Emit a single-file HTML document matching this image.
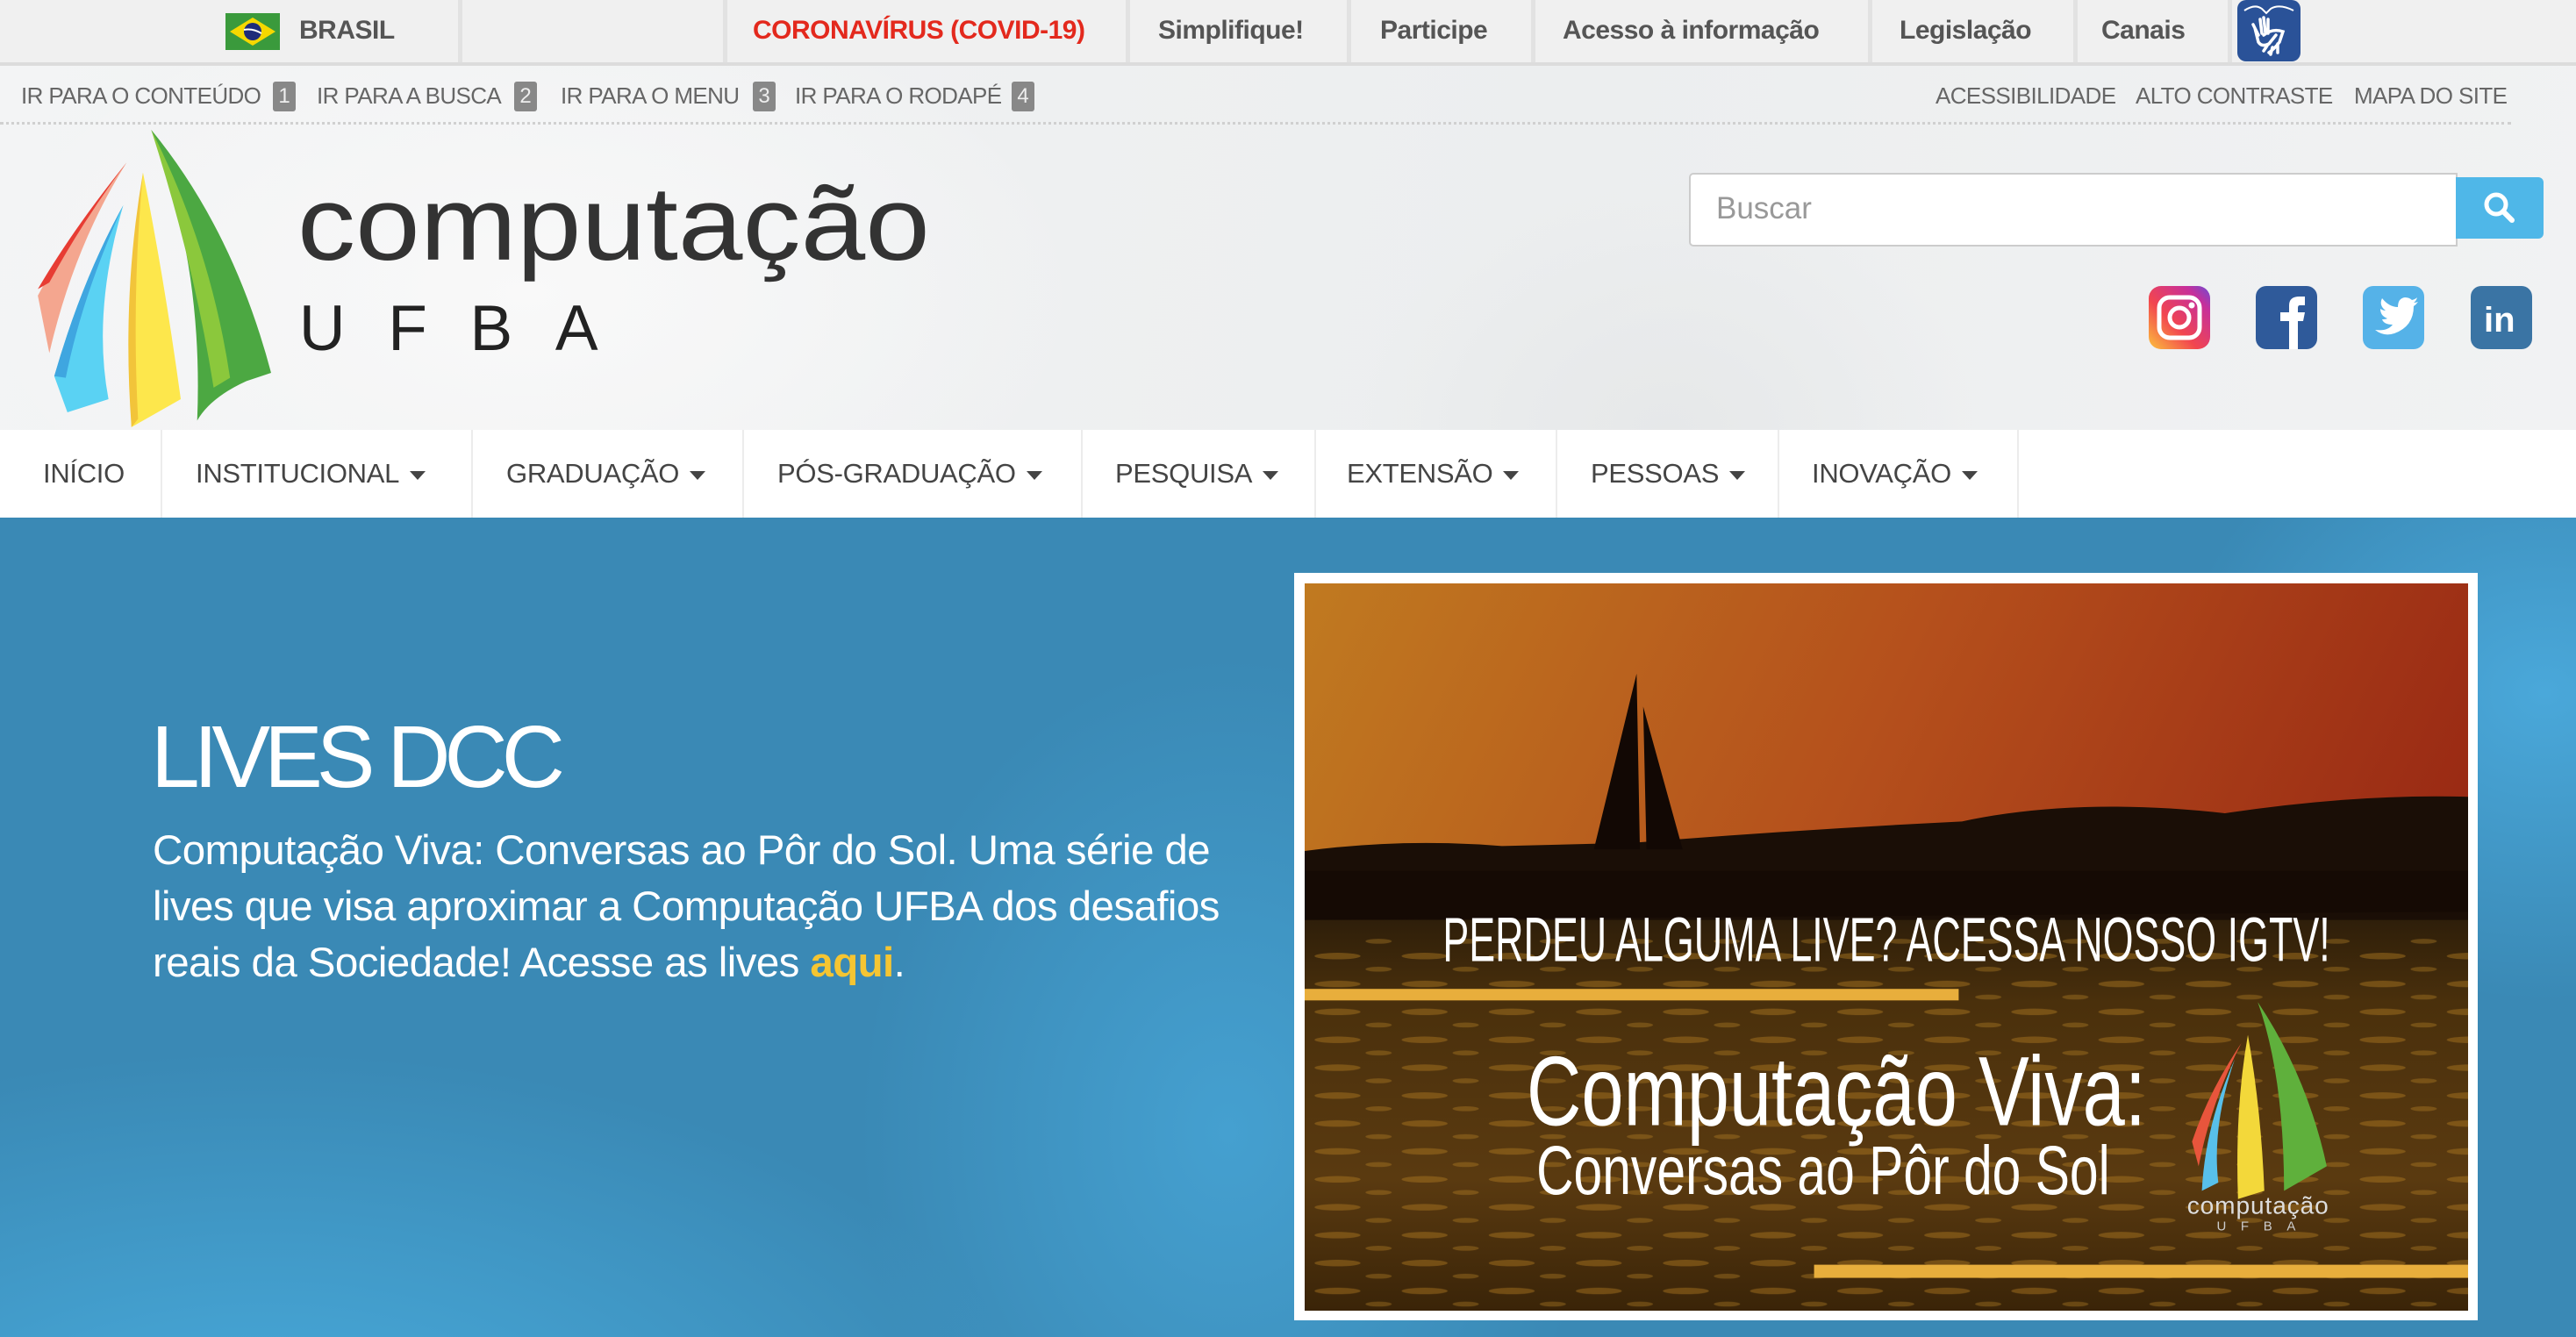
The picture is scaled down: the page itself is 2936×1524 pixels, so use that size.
<!DOCTYPE html>
<html><head><meta charset="utf-8"><style>
*{margin:0;padding:0;box-sizing:border-box}
body{width:2936px;height:1524px;overflow:hidden;font-family:"Liberation Sans",sans-serif;position:relative;background:#fff}
.abs{position:absolute;white-space:nowrap}
#top{position:absolute;left:0;top:0;width:2936px;height:75px;background:#f0f0f0;border-bottom:4px solid #dcdcdc}
.sep{position:absolute;top:0;width:5px;height:71px;background:#e2e2e2}
.tb{position:absolute;top:18px;font-size:30px;font-weight:bold;color:#555;letter-spacing:-0.5px}
#hdr{position:absolute;left:0;top:75px;width:2936px;height:415px;background:radial-gradient(ellipse 900px 500px at 600px 260px,#f9f9f9,rgba(240,241,242,0) 70%),radial-gradient(ellipse 500px 420px at 1900px 420px,#e6e8e9,rgba(238,239,240,0) 70%),linear-gradient(100deg,#f3f4f5,#eceeef 60%,#f1f2f3)}
.sk{position:absolute;top:94px;font-size:26px;color:#666;letter-spacing:-0.6px}
.bd{position:absolute;top:93px;width:26px;height:34px;background:#888;color:#eee;font-size:24px;text-align:center;line-height:34px;border-radius:3px}
#nav{position:absolute;left:0;top:490px;width:2936px;height:100px;background:#fff}
.nv{position:absolute;top:32px;font-size:31px;color:#444;letter-spacing:-0.3px}
.nv .c{display:inline-block;margin-left:12px;width:0;height:0;border-left:9px solid transparent;border-right:9px solid transparent;border-top:10px solid #444;vertical-align:middle}
.ns{position:absolute;top:0;width:2px;height:100px;background:#ececec}
#blue{position:absolute;left:0;top:590px;width:2936px;height:934px;background:radial-gradient(ellipse 1300px 700px at 300px 1100px,#4aaedf,rgba(58,137,181,0) 70%),radial-gradient(ellipse 700px 900px at 1400px 700px,#45a0d0,rgba(58,137,181,0) 60%),radial-gradient(ellipse 600px 500px at 2900px 200px,#4aa8da,rgba(58,137,181,0) 70%),#3a89b5}
</style></head><body>

<div id="top">
 <div class="sep" style="left:522px"></div><div class="sep" style="left:824px"></div><div class="sep" style="left:1283px"></div><div class="sep" style="left:1535px"></div><div class="sep" style="left:1745px"></div><div class="sep" style="left:2129px"></div><div class="sep" style="left:2363px"></div><div class="sep" style="left:2539px"></div>
 <svg class="abs" style="left:257px;top:15px" width="62" height="42" viewBox="0 0 62 42"><rect width="62" height="42" fill="#3a9a3c"/><path d="M31 5 L57 21 L31 37 L5 21Z" fill="#f5d800"/><circle cx="31" cy="21" r="10" fill="#1e2b7a"/><path d="M21 19 Q31 17 41 23" stroke="#fff" stroke-width="2" fill="none"/></svg>
 <div class="tb" style="left:341px">BRASIL</div>
 <div class="tb" style="left:858px;color:#e3291d">CORONAVÍRUS (COVID-19)</div>
 <div class="tb" style="left:1320px">Simplifique!</div>
 <div class="tb" style="left:1573px">Participe</div>
 <div class="tb" style="left:1781px">Acesso à informação</div>
 <div class="tb" style="left:2165px">Legislação</div>
 <div class="tb" style="left:2395px">Canais</div>
 <svg class="abs" style="left:2550px;top:0" width="72" height="70" viewBox="0 0 72 70"><rect width="72" height="70" rx="10" fill="#2a5298"/><path d="M8 12 Q20 4 28 10 L33 15 L38 10 Q48 4 64 12" stroke="#fff" stroke-width="2" fill="none"/><path d="M20 32 L24 48 Q28 54 36 50 L44 40 M26 22 L28 38 M30 20 L32 37 M35 22 L35 38 M18 28 L24 40" stroke="#fff" stroke-width="3.5" fill="none" stroke-linecap="round"/><path d="M30 40 Q40 32 52 36 L48 48 Q42 56 36 60 M34 52 L30 58 M40 54 L38 62 M46 50 L46 60" stroke="#fff" stroke-width="3.5" fill="none" stroke-linecap="round"/></svg>
</div>

<div id="hdr"></div>
<div class="sk" style="left:24px">IR PARA O CONTEÚDO</div><div class="bd" style="left:311px">1</div>
<div class="sk" style="left:361px">IR PARA A BUSCA</div><div class="bd" style="left:586px">2</div>
<div class="sk" style="left:639px">IR PARA O MENU</div><div class="bd" style="left:858px">3</div>
<div class="sk" style="left:906px">IR PARA O RODAPÉ</div><div class="bd" style="left:1153px">4</div>
<div class="sk" style="left:2206px">ACESSIBILIDADE</div>
<div class="sk" style="left:2434px">ALTO CONTRASTE</div>
<div class="sk" style="left:2683px">MAPA DO SITE</div>
<div class="abs" style="left:0;top:139px;width:2862px;border-top:3px dotted #d0d0d0"></div>

<svg class="abs" style="left:0;top:0" width="2936" height="490" viewBox="0 0 1568 261.7">
 <path d="M92,79 Q142,140 165,227 L150,232 Q128,242 120,256 Q124,160 92,79Z" fill="#4ca842"/>
 <path d="M92,79 Q128,150 140,230 L130,236 Q118,160 92,79Z" fill="#8bc83c"/>
 <path d="M87,105 Q100,170 110,243 L80,260 Q76,180 87,105Z" fill="#fde74c"/>
 <path d="M87,105 Q80,180 84,255 L80,260 Q74,180 87,105Z" fill="#f2c43a"/>
 <path d="M75,125 Q56,190 66,243 L41,251 L33,229 Q50,170 75,125Z" fill="#5ad2f3"/>
 <path d="M75,125 Q50,180 40,230 L33,229 Q50,170 75,125Z" fill="#3fa6e0"/>
 <path d="M77,99 Q44,140 23,180 L30,215 Q45,150 77,99Z" fill="#f4a68f"/>
 <path d="M77,99 Q44,140 23,176 L30,172 Q50,135 77,99Z" fill="#e73c33"/>
 <text x="181" y="158" font-family="Liberation Sans, sans-serif" font-size="64" fill="#333" textLength="385" lengthAdjust="spacingAndGlyphs">computação</text>
 <text x="182" y="213" font-family="Liberation Sans, sans-serif" font-size="39" fill="#222" textLength="182" lengthAdjust="spacing">UFBA</text>
</svg>

<div class="abs" style="left:1925px;top:197px;width:876px;height:84px;background:#fff;border:2px solid #ccc;border-radius:5px 0 0 5px"></div>
<div class="abs" style="left:1956px;top:218px;font-size:35px;color:#999">Buscar</div>
<div class="abs" style="left:2799px;top:202px;width:100px;height:70px;background:#4fb7e8;border-radius:0 6px 6px 0"></div>
<svg class="abs" style="left:2829px;top:217px" width="40" height="40" viewBox="0 0 40 40"><circle cx="16" cy="16" r="11" stroke="#fff" stroke-width="5" fill="none"/><path d="M24 24 L34 34" stroke="#fff" stroke-width="6" stroke-linecap="round"/></svg>

<svg class="abs" style="left:2449px;top:326px" width="70" height="72" viewBox="0 0 70 72"><defs><linearGradient id="ig" x1="0" y1="1" x2="1" y2="0"><stop offset="0" stop-color="#fcc13c"/><stop offset=".4" stop-color="#f2464f"/><stop offset=".8" stop-color="#c72f9a"/><stop offset="1" stop-color="#6d4cd4"/></linearGradient></defs><rect width="70" height="72" rx="14" fill="url(#ig)"/><rect x="12" y="13" width="46" height="46" rx="12" stroke="#fff" stroke-width="5" fill="none"/><circle cx="35" cy="36" r="11" stroke="#fff" stroke-width="5" fill="none"/><circle cx="49" cy="22" r="3.5" fill="#fff"/></svg>
<svg class="abs" style="left:2571px;top:326px" width="70" height="72" viewBox="0 0 70 72"><rect width="70" height="72" rx="12" fill="#2f5a9a"/><path d="M38 72 V40 H28 V30 H38 V22 Q38 12 50 12 H56 V22 H50 Q48 22 48 25 V30 H56 L54 40 H48 V72Z" fill="#fff"/></svg>
<svg class="abs" style="left:2693px;top:326px" width="70" height="72" viewBox="0 0 70 72"><rect width="70" height="72" rx="12" fill="#55b2e8"/><path d="M14 50 Q28 52 34 44 Q24 44 22 38 Q26 38 28 37 Q20 34 20 26 Q23 28 26 28 Q18 22 22 14 Q30 24 40 24 Q40 14 48 13 Q53 13 56 16 Q60 15 62 13 Q61 17 58 19 Q61 19 63 18 Q61 21 58 23 Q58 46 36 54 Q24 58 14 50Z" fill="#fff"/></svg>
<svg class="abs" style="left:2816px;top:326px" width="70" height="72" viewBox="0 0 70 72"><rect width="70" height="72" rx="12" fill="#3a74a4"/><text x="15" y="52" font-family="Liberation Sans, sans-serif" font-weight="bold" font-size="40" fill="#fff">in</text></svg>

<div id="nav">
 <div class="ns" style="left:183px"></div><div class="ns" style="left:537px"></div><div class="ns" style="left:846px"></div><div class="ns" style="left:1232px"></div><div class="ns" style="left:1498px"></div><div class="ns" style="left:1773px"></div><div class="ns" style="left:2026px"></div><div class="ns" style="left:2299px"></div>
 <div class="nv" style="left:49px">INÍCIO</div>
 <div class="nv" style="left:223px">INSTITUCIONAL<span class="c"></span></div>
 <div class="nv" style="left:577px">GRADUAÇÃO<span class="c"></span></div>
 <div class="nv" style="left:886px">PÓS-GRADUAÇÃO<span class="c"></span></div>
 <div class="nv" style="left:1271px">PESQUISA<span class="c"></span></div>
 <div class="nv" style="left:1535px">EXTENSÃO<span class="c"></span></div>
 <div class="nv" style="left:1813px">PESSOAS<span class="c"></span></div>
 <div class="nv" style="left:2065px">INOVAÇÃO<span class="c"></span></div>
</div>

<div id="blue"></div>
<div class="abs" style="left:172px;top:806px;font-size:100px;color:#fff;letter-spacing:-7px">LIVES DCC</div>
<div class="abs" style="left:174px;top:938px;font-size:47.5px;line-height:64px;color:#fff;letter-spacing:-0.6px">Computação Viva: Conversas ao Pôr do Sol. Uma série de<br>lives que visa aproximar a Computação UFBA dos desafios<br>reais da Sociedade! Acesse as lives <b style="color:#f5c532">aqui</b>.</div>

<div class="abs" style="left:1475px;top:653px;width:1349px;height:852px;background:#fff"></div>
<svg class="abs" style="left:1487px;top:665px" width="1326" height="829" viewBox="0 0 708 443" preserveAspectRatio="none">
 <defs>
  <linearGradient id="sky" x1="0" y1="0" x2="1" y2="0.3"><stop offset="0" stop-color="#c07a20"/><stop offset=".5" stop-color="#b5501c"/><stop offset="1" stop-color="#9a2a14"/></linearGradient>
  <linearGradient id="wat" x1="0" y1="0" x2="0" y2="1"><stop offset="0" stop-color="#1e1408"/><stop offset=".3" stop-color="#4a300c"/><stop offset=".7" stop-color="#5a3a10"/><stop offset="1" stop-color="#3a2408"/></linearGradient>
  <pattern id="rip" width="53" height="17" patternUnits="userSpaceOnUse"><ellipse cx="20" cy="6" rx="14" ry="2" fill="#b07a22" opacity=".45"/><ellipse cx="45" cy="14" rx="8" ry="1.5" fill="#c08a28" opacity=".35"/></pattern>
 </defs>
 <rect width="708" height="443" fill="url(#sky)"/>
 <rect y="175" width="708" height="268" fill="url(#wat)"/>
 <rect y="215" width="708" height="228" fill="url(#rip)"/>
 <path d="M0,163 Q60,155 120,160 L200,158 Q300,150 400,145 Q470,130 560,140 Q640,128 708,130 L708,205 L0,205Z" fill="#1a0e06"/>
 <path d="M0,175 L708,175 L708,200 L0,205Z" fill="#140a04" opacity=".8"/>
 <path d="M202,55 L176,162 L204,162Z M206,75 L230,162 L208,162Z" fill="#120804"/>
 <text x="84" y="230" font-family="Liberation Sans Narrow, Liberation Sans, sans-serif" font-size="38" fill="#fff" textLength="540" lengthAdjust="spacingAndGlyphs">PERDEU ALGUMA LIVE? ACESSA NOSSO IGTV!</text>
 <rect x="0" y="247" width="398" height="7" fill="#e8ae3c"/>
 <text x="135" y="330" font-family="Liberation Sans Narrow, Liberation Sans, sans-serif" font-size="60" fill="#fff" textLength="377" lengthAdjust="spacingAndGlyphs">Computação Viva:</text>
 <text x="141" y="372" font-family="Liberation Sans Narrow, Liberation Sans, sans-serif" font-size="42" fill="#fff" textLength="349" lengthAdjust="spacingAndGlyphs">Conversas ao Pôr do Sol</text>
 <path d="M580,255 Q610,300 622,355 L596,370 Q596,300 580,255Z" fill="#5fb03c"/>
 <path d="M574,275 Q582,320 584,370 L568,375 Q566,320 574,275Z" fill="#f3d83a"/>
 <path d="M566,290 Q552,330 556,365 L546,370 Q548,330 566,290Z" fill="#58c0ea"/>
 <path d="M570,280 Q550,310 540,340 L544,355 Q552,315 570,280Z" fill="#e8553c"/>
 <text x="537" y="384" font-family="Liberation Sans, sans-serif" font-size="15" fill="#ddd" textLength="86">computação</text>
 <text x="555" y="394" font-family="Liberation Sans, sans-serif" font-size="8" fill="#ccc" textLength="48">UFBA</text>
 <rect x="310" y="415" width="398" height="8" fill="#e8ae3c"/>
</svg>
</body></html>
